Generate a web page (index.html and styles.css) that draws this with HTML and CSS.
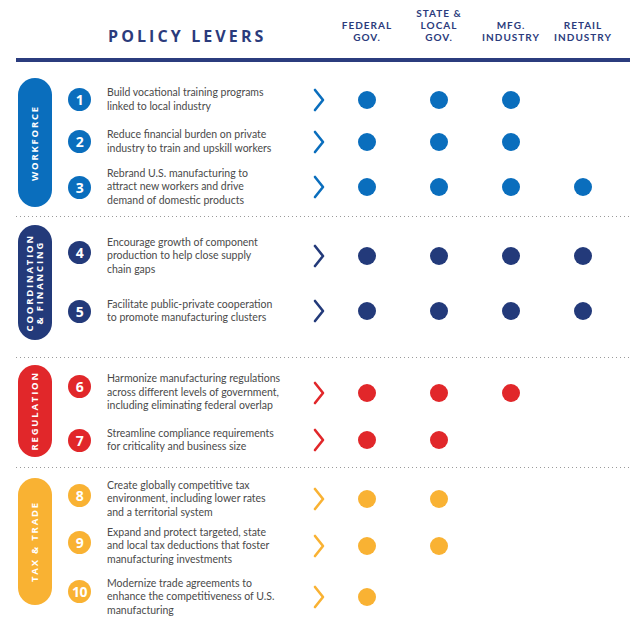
FILE: index.html
```html
<!DOCTYPE html>
<html>
<head>
<meta charset="utf-8">
<link rel="stylesheet" href="styles.css">
</head>
<body>
<div class="page">
  <header class="head">
    <h1 class="title">POLICY LEVERS</h1>
    <div class="col">FEDERAL<br>GOV.</div>
    <div class="col">STATE &amp;<br>LOCAL<br>GOV.</div>
    <div class="col">MFG.<br>INDUSTRY</div>
    <div class="col">RETAIL<br>INDUSTRY</div>
  </header>
  <div class="rule"></div>

  <section class="sec sec1 c-blue">
    <div class="pill"><span>WORKFORCE</span></div>
    <div class="rows">
      <div class="row h43"><span class="num">1</span><p class="txt">Build vocational training programs<br>linked to local industry</p><svg class="chev" viewBox="0 0 12 24"><polyline points="2,2 10,12 2,22"/></svg><i class="dot"></i><i class="dot"></i><i class="dot"></i><i class="none"></i></div>
      <div class="row h41"><span class="num">2</span><p class="txt">Reduce financial burden on private<br>industry to train and upskill workers</p><svg class="chev" viewBox="0 0 12 24"><polyline points="2,2 10,12 2,22"/></svg><i class="dot"></i><i class="dot"></i><i class="dot"></i><i class="none"></i></div>
      <div class="row h50"><span class="num">3</span><p class="txt">Rebrand U.S. manufacturing to<br>attract new workers and drive<br>demand of domestic products</p><svg class="chev" viewBox="0 0 12 24"><polyline points="2,2 10,12 2,22"/></svg><i class="dot"></i><i class="dot"></i><i class="dot"></i><i class="dot"></i></div>
    </div>
  </section>
  <div class="sep"></div>

  <section class="sec sec2 c-navy">
    <div class="pill"><span>COORDINATION<br>&amp; FINANCING</span></div>
    <div class="rows">
      <div class="row h62"><span class="num up">4</span><p class="txt">Encourage growth of component<br>production to help close supply<br>chain gaps</p><svg class="chev" viewBox="0 0 12 24"><polyline points="2,2 10,12 2,22"/></svg><i class="dot"></i><i class="dot"></i><i class="dot"></i><i class="dot"></i></div>
      <div class="row h48"><span class="num">5</span><p class="txt">Facilitate public-private cooperation<br>to promote manufacturing clusters</p><svg class="chev" viewBox="0 0 12 24"><polyline points="2,2 10,12 2,22"/></svg><i class="dot"></i><i class="dot"></i><i class="dot"></i><i class="dot"></i></div>
    </div>
  </section>
  <div class="sep"></div>

  <section class="sec sec3 c-red">
    <div class="pill"><span>REGULATION</span></div>
    <div class="rows">
      <div class="row h55"><span class="num up2">6</span><p class="txt">Harmonize manufacturing regulations<br>across different levels of government,<br>including eliminating federal overlap</p><svg class="chev" viewBox="0 0 12 24"><polyline points="2,2 10,12 2,22"/></svg><i class="dot"></i><i class="dot"></i><i class="dot"></i><i class="none"></i></div>
      <div class="row h40"><span class="num">7</span><p class="txt">Streamline compliance requirements<br>for criticality and business size</p><svg class="chev" viewBox="0 0 12 24"><polyline points="2,2 10,12 2,22"/></svg><i class="dot"></i><i class="dot"></i><i class="none"></i><i class="none"></i></div>
    </div>
  </section>
  <div class="sep"></div>

  <section class="sec sec4 c-yellow">
    <div class="pill"><span>TAX &amp; TRADE</span></div>
    <div class="rows">
      <div class="row h42"><span class="num up">8</span><p class="txt">Create globally competitive tax<br>environment, including lower rates<br>and a territorial system</p><svg class="chev" viewBox="0 0 12 24"><polyline points="2,2 10,12 2,22"/></svg><i class="dot"></i><i class="dot"></i><i class="none"></i><i class="none"></i></div>
      <div class="row h52"><span class="num up">9</span><p class="txt">Expand and protect targeted, state<br>and local tax deductions that foster<br>manufacturing investments</p><svg class="chev" viewBox="0 0 12 24"><polyline points="2,2 10,12 2,22"/></svg><i class="dot"></i><i class="dot"></i><i class="none"></i><i class="none"></i></div>
      <div class="row h50"><span class="num up2">10</span><p class="txt">Modernize trade agreements to<br>enhance the competitiveness of U.S.<br>manufacturing</p><svg class="chev" viewBox="0 0 12 24"><polyline points="2,2 10,12 2,22"/></svg><i class="dot"></i><i class="none"></i><i class="none"></i><i class="none"></i></div>
    </div>
  </section>
</div>
</body>
</html>
```
FILE: styles.css
```css
* { box-sizing: border-box; }
html, body { margin: 0; padding: 0; background: #ffffff; }
body { width: 640px; height: 619px; overflow: hidden; font-family: "Open Sans", "Noto Sans", sans-serif; }

.page { padding: 0 10px 0 16px; }

.head {
  height: 58px;
  display: flex;
  align-items: flex-end;
  padding-bottom: 15px;
}
.title {
  margin: 0 0 -2px 0;
  width: 315px;
  padding-left: 92px;
  font-size: 16px;
  line-height: 18px;
  letter-spacing: 3.1px;
  font-weight: 700;
  color: #2b3b7c;
  white-space: nowrap;
}
.col {
  width: 72px;
  text-align: center;
  font-family: "Lato", "Open Sans", sans-serif;
  font-size: 10px;
  line-height: 12px;
  letter-spacing: 1px;
  font-weight: 700;
  color: #2b3b7c;
}

.rule { height: 4px; background: #2b3c7e; }

.sep {
  height: 1px;
  background-image: linear-gradient(to right, #9a9a9a 0 1px, transparent 1px 4px);
  background-size: 4px 1px;
  background-repeat: repeat-x;
}

.c-blue { --c: #0a6ebd; }
.c-navy { --c: #233a7a; }
.c-red { --c: #e1272a; }
.c-yellow { --c: #f9b233; }

.sec { display: flex; align-items: flex-start; }
.sec1 { padding: 16px 0 4px; }
.sec2 { padding: 8px 0 17px; }
.sec3 { padding: 7px 0 7px; }
.sec4 { padding: 10px 0 2px; }

.pill {
  width: 34px;
  margin-left: 2px;
  border-radius: 17px;
  background: var(--c);
  display: flex;
  align-items: center;
  justify-content: center;
}
.sec1 .pill { height: 129px; }
.sec2 .pill { height: 115px; }
.sec3 .pill { height: 92px; }
.sec4 .pill { height: 127px; }
.pill span {
  writing-mode: vertical-rl;
  transform: rotate(180deg);
  color: #ffffff;
  font-weight: 700;
  font-size: 9.5px;
  line-height: 10px;
  letter-spacing: 1.8px;
  text-align: center;
}

.rows { display: flex; flex-direction: column; }
.row {
  display: grid;
  grid-template-columns: 55px 193px 31px repeat(4, 72px);
  align-items: center;
  justify-items: center;
}
.h40 { height: 40px; }
.h41 { height: 41px; }
.h42 { height: 42px; }
.h43 { height: 43px; }
.h48 { height: 48px; }
.h50 { height: 50px; }
.h52 { height: 52px; }
.h55 { height: 55px; }
.h62 { height: 62px; }

.num {
  width: 23px;
  height: 23px;
  border-radius: 50%;
  background: var(--c);
  color: #ffffff;
  font-weight: 700;
  font-size: 14px;
  line-height: 23px;
  text-align: center;
  letter-spacing: -0.4px;
}
.num.up { margin-bottom: 8px; }
.num.up2 { margin-bottom: 12px; }

.txt {
  justify-self: start;
  margin: 0;
  font-family: "Lato", "Open Sans", sans-serif;
  font-size: 10.5px;
  line-height: 13.4px;
  color: #4a4a4a;
  white-space: nowrap;
}

.chev {
  width: 12px;
  height: 24px;
  margin-left: 7px;
  fill: none;
  stroke: var(--c);
  stroke-width: 2.6;
  stroke-linecap: round;
  stroke-linejoin: round;
}

.dot {
  width: 18px;
  height: 18px;
  border-radius: 50%;
  background: var(--c);
}
.none { width: 18px; height: 18px; }
```
